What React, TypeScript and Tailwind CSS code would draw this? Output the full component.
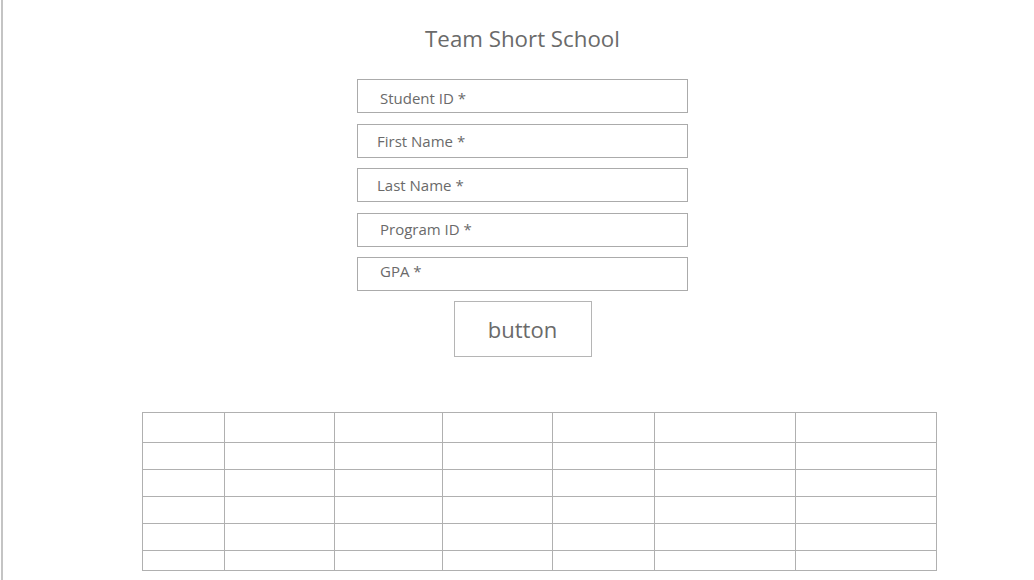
const fields = [
  { label: "Student ID *", pad: "pl-[22px] pt-[5px]" },
  { label: "First Name *", pad: "pl-[19px] pt-[1px]" },
  { label: "Last Name *", pad: "pl-[19px] pt-[1px]" },
  { label: "Program ID *", pad: "pl-[22px]" },
  { label: "GPA *", pad: "pl-[22px] pb-[5px]" },
];

const colWidths = ["w-[82px]", "w-[110px]", "w-[108px]", "w-[110px]", "w-[102px]", "w-[141px]", "w-[141px]"];
const rowHeights = ["h-[30px]", "h-[27px]", "h-[27px]", "h-[27px]", "h-[27px]", "h-[20px]"];

export default function App() {
  return (
    <div className="h-[580px] w-[1034px] bg-white pl-px font-['Open_Sans',sans-serif] text-[#6a6a6a]">
      <div className="flex h-full flex-col border-l-2 border-[#c4c4c4]">
        <div className="flex flex-col items-center pl-[8px]">
          <h1 className="mt-[24px] text-[22.3px] leading-[30px]">Team Short School</h1>
          <div className="mt-[25px] flex flex-col gap-[10.5px]">
            {fields.map((f) => (
              <div
                key={f.label}
                className={`flex h-[34px] w-[331px] items-center border border-[#ababab] text-[15px] ${f.pad}`}
              >
                {f.label}
              </div>
            ))}
          </div>
          <button className="mt-[10px] h-[56px] w-[138px] border border-[#b5b5b5] text-[22px]">
            button
          </button>
        </div>
        <table className="ml-[139px] mt-[55px] w-[794px] table-fixed self-start border-collapse">
          <tbody>
            {rowHeights.map((h, r) => (
              <tr key={r} className={h}>
                {colWidths.map((w, c) => (
                  <td key={c} className={`${w} border border-[#b0b0b0] p-0`} />
                ))}
              </tr>
            ))}
          </tbody>
        </table>
      </div>
    </div>
  );
}
